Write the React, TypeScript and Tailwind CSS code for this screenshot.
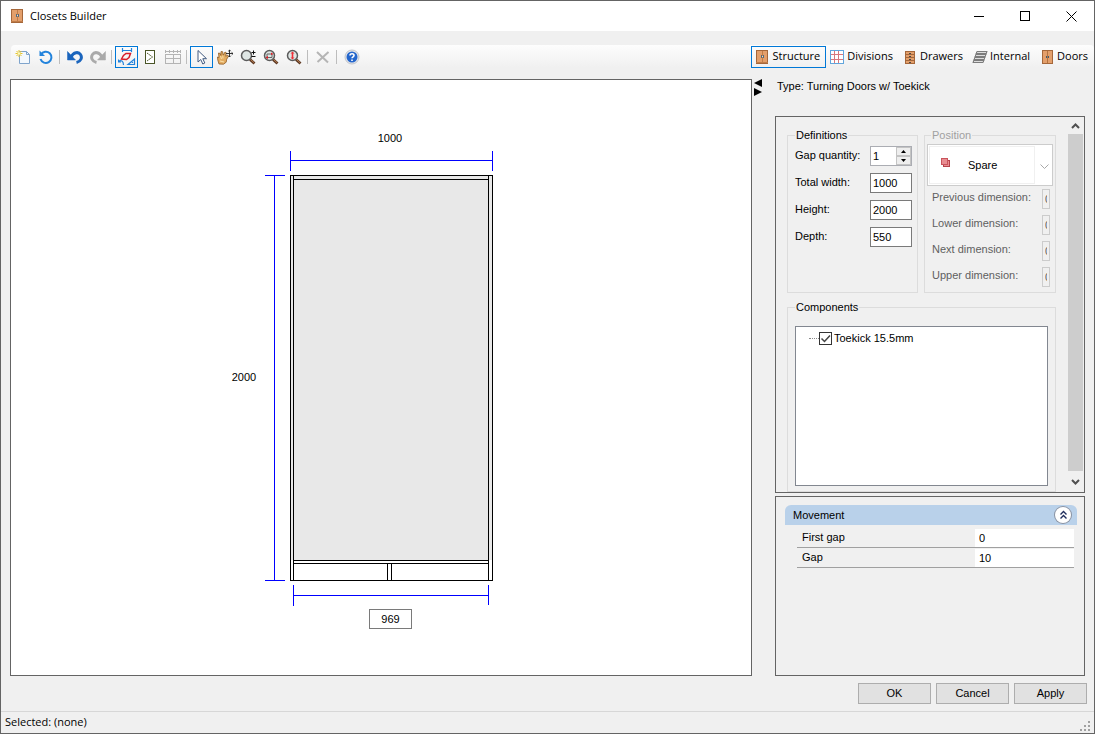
import classNames from "clsx";
import React from "react";

interface IconProps {
  className?: string;
}

const Svg: React.FC<React.SVGProps<SVGSVGElement>> = (props) => (
  <svg width={16} height={16} viewBox="0 0 16 16" fill="none" className="shrink-0" aria-hidden="true" {...props} />
);

const ClosetIcon: React.FC<IconProps> = () => (
  <Svg shapeRendering="crispEdges">
    <path d="M2 1h12v14H2z" fill="#a5673a" />
    <path d="M3 2h10v11H3z" fill="#e39f6b" />
    <path d="M8 2h1v11H8zM2 13h12v1H2z" fill="#c07c49" />
    <path d="M7 6h1v3H7zM9 6h1v3H9z" fill="#4e6b80" />
    <path d="M8 7h1v1H8z" fill="#e8e2d8" />
  </Svg>
);

const DoorsIcon: React.FC<IconProps> = () => (
  <Svg shapeRendering="crispEdges">
    <path d="M3 1h11v14H3z" fill="#a5673a" />
    <path d="M4 2h9v12H4z" fill="#e39f6b" />
    <path d="M8 2h1v12H8z" fill="#b5733f" />
    <path d="M7 7h1v2H7zM9 7h1v2H9z" fill="#3f5a70" />
  </Svg>
);

const DivisionsIcon: React.FC<IconProps> = () => (
  <Svg shapeRendering="crispEdges">
    <path d="M1 1h14v14H1z" fill="#fff" />
    <path d="M5.500 1v14M9.500 1v14M1 5.500h14M1 10.500h14" stroke="#d9777c" />
    <path d="M1.500 1.500h13v13h-13z" stroke="#62a5dc" />
  </Svg>
);

const DrawersIcon: React.FC<IconProps> = () => (
  <Svg shapeRendering="crispEdges">
    <path d="M3 2h10v13H3z" fill="#a5673a" />
    <path d="M4 3h8v2H4zM4 6h8v2H4zM4 9h8v2H4zM4 12h8v2H4z" fill="#e39f6b" />
    <path d="M7 4h2v1H7zM7 7h2v1H7zM7 10h2v1H7zM7 13h2v1H7z" fill="#4a4a4a" />
  </Svg>
);

const InternalIcon: React.FC<IconProps> = () => (
  <Svg stroke="#7c7c7c">
    <path d="M5 2.500h10l-1 2H4zM4 5.500h10l-1 2H3zM3 8.500h10l-1 2H2zM2 11.500h10l-1 2H1z" fill="#ddd" />
    <path d="M5 2.500L1 13.500M15 2.500L11 13.500" />
  </Svg>
);

const NewIcon: React.FC<IconProps> = () => (
  <Svg>
    <path d="M4.500 2.500h7l3 3v9h-10z" fill="#f3f8fd" stroke="#7fa4cc" />
    <path d="M11.500 2.500v3h3" stroke="#7fa4cc" />
    <path d="M4 1v7M.5 4.500h7M1.500 2l5 5M6.500 2l-5 5" stroke="#e6c52b" />
    <circle cx={4} cy={4.500} r={1.300} fill="#fff9b8" />
  </Svg>
);

const RefreshIcon: React.FC<IconProps> = () => (
  <Svg>
    <path d="M3 5.500a5.600 5.600 0 1 1-.5 4.500" stroke="#2283dc" strokeWidth={2} />
    <path d="M1.500 1.500v5.500H7z" fill="#2283dc" />
  </Svg>
);

const ArrowBackIcon: React.FC<{ redo?: boolean }> = ({ redo }) => (
  <Svg>
    <g
      transform={redo ? "matrix(-1 0 0 1 16 0)" : undefined}
      stroke={redo ? "#aaa" : "#1b65bd"}
      fill={redo ? "#aaa" : "#1b65bd"}
    >
      <path d="M4 8c2.500-5 7.500-5.500 9.500-2.500s.5 7-4 8" fill="none" strokeWidth={3} />
      <path d="M.5 2.500v8.500h8z" strokeWidth={0.500} />
    </g>
  </Svg>
);

const ShapesIcon: React.FC<IconProps> = () => (
  <Svg width={18} height={18} viewBox="0 0 18 18" strokeWidth={1.200}>
    <path d="M4.500 0v4M13.500 0v4M4.500 2.500h9" stroke="#2283dc" />
    <path d="M3.500 11l2-3.500 2.500-2h4.500l-1.500 4-2.500 2z" stroke="#d81e2c" strokeWidth={1.500} />
    <path d="M.5 13.500c2.500-2 5-.5 5 3.500M.5 11.500v2.500h2.500M16.500 11v5.500h-6.500zM14.500 14v1" stroke="#2283dc" />
  </Svg>
);

const OpeningIcon: React.FC<IconProps> = () => (
  <Svg>
    <path d="M3.500 1.500h9v13h-9z" fill="#fff" stroke="#4a5527" shapeRendering="crispEdges" />
    <path d="M5 4l5.500 4L5 12" stroke="#4a5527" strokeDasharray="1.500 .5" />
  </Svg>
);

const GridIcon: React.FC<IconProps> = () => (
  <Svg stroke="#b4b4b4" shapeRendering="crispEdges">
    <path d="M.5 5.500h15v9H.5zM8.500 5v9M0 9.500h16M0 2.500h16M.5 1v3M4.500 1v3M8.500 1v3M12.500 1v3M15.500 1v3" />
  </Svg>
);

const CursorIcon: React.FC<IconProps> = () => (
  <Svg>
    <path d="M4 1.500v11.500l2.800-2.500 2 4.500 2-1-2-4.300h3.700z" fill="#fff" stroke="#415a80" />
  </Svg>
);

const HandIcon: React.FC<IconProps> = () => (
  <Svg>
    <path
      d="M2 15L.8 11 .5 8l1.500.5L1.500 4l1.600.4.8 2L4 2.500l1.600.2.7 3.500L8 3l1.300.8-.6 3.400 2-1 .8 1-1.800 3-.5 3-2.700 2z"
      fill="#e3ac61"
      stroke="#8e5b24"
      strokeWidth={0.800}
    />
    <path d="M3.500 7l1 3M5.800 6.500l.2 3M3 12l4 1" stroke="#fae0a9" />
    <path
      d="M12.500 1v7M9 4.500h7M11.300 2.200l1.200-1.200 1.200 1.200M11.300 6.800L12.500 8l1.200-1.200M14.800 3.300L16 4.500l-1.200 1.200"
      stroke="#222"
      strokeWidth={0.900}
    />
  </Svg>
);

const ZoomIcon: React.FC<{ mode: "step" | "window" | "extents" }> = ({ mode }) => (
  <Svg>
    <path d="M10 10.500l4.500 4" stroke="#5b3823" strokeWidth={2.800} />
    <path d="M10.500 10.500l3.700 3.300" stroke="#bd8153" />
    <circle cx={6.500} cy={6.500} r={5} fill="#dfe6e4" stroke="#5c5c5c" strokeWidth={1.500} />
    {mode === "step" && <path d="M11.500 3.500h4M13.500 1.500v4M11.500 7.500h4" stroke="#111" />}
    {mode === "window" && (
      <>
        <path d="M4 5h5v3.500H4z" stroke="#666" />
        <path d="M8 3.500l2.500 1.500L8 6zM5 7L2.500 8.500 5 10z" fill="#e11d26" />
      </>
    )}
    {mode === "extents" && <path d="M6.500 2.500L8.500 4.500H7.300v4h1.200L6.500 10.500l-2-2h1.200v-4H4.500z" fill="#ee3038" />}
  </Svg>
);

const DeleteIcon: React.FC<IconProps> = () => (
  <Svg stroke="#b5b5b5" strokeWidth={2}>
    <path d="M2 3l11 10.500M13.500 3L2.500 13" />
  </Svg>
);

const HelpIcon: React.FC<IconProps> = () => (
  <Svg>
    <circle cx={8} cy={8} r={7} fill="#e4e6ea" stroke="#c2c5cc" />
    <circle cx={8} cy={8} r={5.500} fill="#2466cc" />
    <path
      d="M6 6.500C6 4 10.200 4.200 10 6.500c-.1 1.300-1.900 1.300-2 2.800M8 10.500v1.500"
      stroke="#fff"
      strokeWidth={1.600}
    />
  </Svg>
);

interface Tool {
  label: string;
  icon: React.ReactNode;
  active?: boolean;
}

const toolGroups: Tool[][] = [
  [
    { label: "New", icon: <NewIcon /> },
    { label: "Refresh", icon: <RefreshIcon /> },
  ],
  [
    { label: "Undo", icon: <ArrowBackIcon /> },
    { label: "Redo", icon: <ArrowBackIcon redo /> },
  ],
  [
    { label: "Dimensions", icon: <ShapesIcon />, active: true },
    { label: "Openings", icon: <OpeningIcon /> },
    { label: "Grid", icon: <GridIcon /> },
  ],
  [
    { label: "Select", icon: <CursorIcon />, active: true },
    { label: "Pan", icon: <HandIcon /> },
    { label: "Zoom", icon: <ZoomIcon mode="step" /> },
    { label: "Zoom window", icon: <ZoomIcon mode="window" /> },
    { label: "Zoom extents", icon: <ZoomIcon mode="extents" /> },
  ],
  [{ label: "Delete", icon: <DeleteIcon /> }],
  [{ label: "Help", icon: <HelpIcon /> }],
];

const tabs: Tool[] = [
  { label: "Structure", icon: <ClosetIcon />, active: true },
  { label: "Divisions", icon: <DivisionsIcon /> },
  { label: "Drawers", icon: <DrawersIcon /> },
  { label: "Internal", icon: <InternalIcon /> },
  { label: "Doors", icon: <DoorsIcon /> },
];

const sizes = [
  { label: "Total width:", value: "1000" },
  { label: "Height:", value: "2000" },
  { label: "Depth:", value: "550" },
];

const dimensions = ["Previous dimension:", "Lower dimension:", "Next dimension:", "Upper dimension:"];

const movement = [
  { label: "First gap", value: "0" },
  { label: "Gap", value: "10" },
];

const TitleBar: React.FC = () => (
  <header className="flex h-[30px] shrink-0 items-center bg-white pl-2 font-['Open_Sans',sans-serif] text-[11px]">
    <ClosetIcon />
    <h1 className="ml-[5px] flex-1">Closets Builder</h1>
    <button type="button" aria-label="Minimize" className="flex h-full w-[46px] items-center justify-center">
      <svg width="11" height="11" stroke="#000" shapeRendering="crispEdges">
        <path d="M0 5.500h10" />
      </svg>
    </button>
    <button type="button" aria-label="Maximize" className="flex h-full w-[46px] items-center justify-center">
      <svg width="11" height="11" stroke="#000" fill="none" shapeRendering="crispEdges">
        <path d="M.5 .5h9v9h-9z" />
      </svg>
    </button>
    <button type="button" aria-label="Close" className="flex h-full w-[46px] items-center justify-center">
      <svg width="11" height="11" stroke="#000">
        <path d="M.5 .5l10 10M10.500 .5l-10 10" />
      </svg>
    </button>
  </header>
);

const Toolbar: React.FC = () => (
  <nav className="mt-3.5 ml-2.5 flex h-[23px] shrink-0 items-center rounded-sm bg-linear-to-b from-[#fdfdfd] to-[#f0f0f0]">
    {toolGroups.map((group, index) => (
      <React.Fragment key={group[0].label}>
        {index > 0 && <span className="mr-[3px] ml-0.5 h-3.5 w-px bg-[#bdbdbd]" />}
        {group.map(({ label, icon, active }) => (
          <button
            key={label}
            type="button"
            aria-label={label}
            className={classNames(
              "flex h-[22px] w-[23px] items-center justify-center border",
              active ? "border-[#0078d7]" : "border-transparent",
            )}
          >
            {icon}
          </button>
        ))}
      </React.Fragment>
    ))}

    <div className="ml-auto flex font-['Open_Sans',sans-serif] text-[11px]">
      {tabs.map(({ label, icon, active }) => (
        <button
          key={label}
          type="button"
          className={classNames(
            "flex h-[22px] items-center gap-0.5 border pr-[5px] pl-0.5",
            active ? "border-[#0078d7]" : "border-transparent",
          )}
        >
          {icon}
          {label}
        </button>
      ))}
    </div>
  </nav>
);

const Drawing: React.FC = () => (
  <main className="flex min-h-0 min-w-0 flex-1 border border-[#646464] bg-white">
    <svg viewBox="0 0 740 595" className="min-h-0 w-full flex-1" fill="none" shapeRendering="crispEdges">
      <path d="M280 96h201v384H280z" fill="#e8e8e8" />
      <path
        d="M279.500 95.500h202v405h-202zM282.500 95.500v405M477.500 95.500v405M282.500 99.500h195M282.500 480.500h195M282.500 483.500h195M376.500 483.500v17M380.500 483.500v17"
        stroke="#000"
      />
      <path
        d="M279.500 71v20M481.500 71v20M279.500 80.500h202M254 95.500h20M254 500.500h20M263.500 95.500v405M282.500 505v21M477.500 505v20M282.500 515.500h195"
        stroke="#0000ff"
      />
      <g fill="#000" className="font-['Liberation_Sans',sans-serif] text-[11px]" textAnchor="middle">
        <text x="379" y="62">1000</text>
        <text x="233" y="301">2000</text>
      </g>
      <foreignObject x="358" y="529" width="43" height="20">
        <input
          aria-label="Inner width"
          defaultValue="969"
          className="block h-5 w-full border border-[#7a7a7a] bg-white text-center text-[11px] text-black"
        />
      </foreignObject>
    </svg>
  </main>
);

const Definitions: React.FC = () => (
  <fieldset className="w-[131px] border border-[#dcdcdc] pr-[5px] pb-2 pl-[7px]">
    <legend className="px-px leading-[14px]">Definitions</legend>
    <div className="mt-1 flex flex-col gap-[7px]">
      <div className="flex h-5 items-center justify-between">
        <label htmlFor="gaps" className="pb-px">Gap quantity:</label>
        <div className="flex h-5 w-[42px] border border-[#abadb3] bg-white">
          <input id="gaps" defaultValue="1" className="w-0 flex-1 pl-0.5" />
          <div className="flex w-[15px] flex-col">
            <button
              type="button"
              aria-label="More"
              className="flex flex-1 items-center justify-center border border-[#c4c4c4] bg-[#eee]"
            >
              <svg width="5" height="3">
                <path d="M0 3L2.500 0 5 3z" />
              </svg>
            </button>
            <button
              type="button"
              aria-label="Less"
              className="flex flex-1 items-center justify-center border border-[#c4c4c4] bg-[#eee]"
            >
              <svg width="5" height="3">
                <path d="M0 0L2.500 3 5 0z" />
              </svg>
            </button>
          </div>
        </div>
      </div>
      {sizes.map(({ label, value }) => (
        <div key={label} className="flex h-5 items-center justify-between">
          <label htmlFor={label} className="pb-px">{label}</label>
          <input id={label} defaultValue={value} className="h-5 w-[42px] border border-[#7a7a7a] bg-white pl-0.5" />
        </div>
      ))}
    </div>
  </fieldset>
);

const Position: React.FC = () => (
  <fieldset disabled className="w-[132px] border border-[#dcdcdc] px-0.5 pb-[5px] text-[#5f5f5f]">
    <legend className="ml-1 px-px leading-[14px] text-[#a0a0a0]">Position</legend>
    <div className="relative mt-0.5">
      <select
        aria-label="Position"
        className="block h-[42px] w-full appearance-none border border-[#ccc] bg-white pl-10 text-black opacity-100"
      >
        <option>Spare</option>
      </select>
      <span className="pointer-events-none absolute inset-y-0.5 right-[18px] left-0.5 border border-[#f0f0f0]" />
      <svg
        width="10"
        height="10"
        className="pointer-events-none absolute top-3.5 left-3.5"
        shapeRendering="crispEdges"
      >
        <path d="M2.500 2.500h6v6h-6z" fill="#e88d92" stroke="#b5434b" />
        <path d="M.5 .5h6v6h-6z" fill="#e88d92" stroke="#c9545c" />
      </svg>
      <svg width="9" height="6" className="pointer-events-none absolute top-5 right-1" fill="none" stroke="#a8a8a8">
        <path d="M.5 .5l4 4 4-4" />
      </svg>
    </div>
    <div className="mt-[3px] flex flex-col gap-1.5 pr-[3px] pl-[5px]">
      {dimensions.map((label) => (
        <div key={label} className="flex h-5 items-center justify-between">
          <label htmlFor={label} className="pb-[3px] whitespace-nowrap">{label}</label>
          <input id={label} defaultValue="0" className="h-5 w-2 shrink-0 border border-[#ccc] px-0.5" />
        </div>
      ))}
    </div>
  </fieldset>
);

const Components: React.FC = () => (
  <fieldset className="mt-[7px] border border-[#dcdcdc] px-[7px] pb-[5px]">
    <legend className="px-px leading-[14px]">Components</legend>
    <div className="mt-3 h-40 border border-[#828790] bg-white pt-1 pl-[13px]">
      <label className="flex items-center leading-[14px]">
        <span className="w-2.5 border-t border-dotted border-[#888]" />
        <span className="relative flex">
          <input
            type="checkbox"
            defaultChecked
            className="peer size-[13px] appearance-none border border-[#333] bg-white"
          />
          <svg
            width="13"
            height="13"
            fill="none"
            stroke="#444"
            strokeWidth="1.5"
            className="pointer-events-none absolute inset-0 hidden peer-checked:block"
          >
            <path d="M2.500 6.500l3 3 5.500-6" />
          </svg>
        </span>
        <span className="ml-0.5">Toekick 15.5mm</span>
      </label>
    </div>
  </fieldset>
);

const ScrollBar: React.FC = () => (
  <div className="flex w-4 flex-col border-r border-[#f0f0f0]">
    <button type="button" aria-label="Scroll up" className="flex h-[17px] items-center justify-center">
      <svg width="9" height="6" fill="none" stroke="#505050" strokeWidth="2">
        <path d="M1 5l3.500-3.500L8 5" />
      </svg>
    </button>
    <div className="flex-1 bg-[#cdcdcd]" />
    <button type="button" aria-label="Scroll down" className="flex h-[21px] items-center justify-center">
      <svg width="9" height="6" fill="none" stroke="#505050" strokeWidth="2">
        <path d="M1 1l3.500 3.500L8 1" />
      </svg>
    </button>
  </div>
);

const Movement: React.FC = () => (
  <section className="mt-[3px] flex-1 border border-[#646464] pt-2 pr-[7px] pl-[9px]">
    <div className="flex h-5 items-center justify-between rounded-t-md bg-[#b9d1ea] pr-1.5 pl-2">
      <h2>Movement</h2>
      <button
        type="button"
        aria-label="Collapse"
        className="flex size-4 items-center justify-center rounded-full bg-white shadow-[0_0_0_1px_#8a93a3]"
      >
        <svg width="9" height="10" fill="none" stroke="#1f2d5c" strokeWidth="1.4">
          <path d="M1.500 4.500l3-3 3 3M1.500 8.500l3-3 3 3" />
        </svg>
      </button>
    </div>
    <div className="mt-[3px] mr-[3px] ml-3">
      {movement.map(({ label, value }) => (
        <div key={label} className="flex h-5 items-center border-b border-[#a0a0a0]">
          <label htmlFor={label} className="flex-1 pl-[5px]">{label}</label>
          <input id={label} defaultValue={value} className="h-[18px] w-[99px] bg-white pl-1" />
        </div>
      ))}
    </div>
  </section>
);

const SidePanel: React.FC = () => (
  <aside className="flex w-[310px] shrink-0 flex-col">
    <p className="h-[37px] pl-0.5 leading-[14px]">Type: Turning Doors w/ Toekick</p>
    <section className="flex border border-[#646464]">
      <div className="flex-1 pt-[11px] pr-3 pl-[11px]">
        <div className="flex justify-between">
          <Definitions />
          <Position />
        </div>
        <Components />
      </div>
      <ScrollBar />
    </section>
    <Movement />
  </aside>
);

export default function App() {
  return (
    <div className="flex h-screen flex-col overflow-hidden border border-[#646464] bg-[#f0f0f0] font-['Liberation_Sans',sans-serif] text-[11px] text-black">
      <TitleBar />
      <Toolbar />

      <div className="mt-[11px] flex min-h-0 flex-1 px-[9px]">
        <Drawing />
        <button type="button" aria-label="Toggle side panel" className="mr-3 flex w-[11px] flex-col items-center">
          <svg width="8" height="18">
            <path d="M8 0v8L0 4zM0 9v8l8-4z" />
          </svg>
        </button>
        <SidePanel />
      </div>

      <div className="flex justify-end gap-[5px] py-[7px] pr-[7px]">
        {["OK", "Cancel", "Apply"].map((label) => (
          <button key={label} type="button" className="h-[21px] w-[73px] border border-[#adadad] bg-[#e1e1e1]">
            {label}
          </button>
        ))}
      </div>

      <footer className="flex h-[22px] shrink-0 items-center justify-between border-t border-[#d7d7d7] pl-1 font-['Open_Sans',sans-serif] text-[11px]">
        <span>Selected: (none)</span>
        <svg width="12" height="12" className="mr-0.5 self-end" fill="#a0a0a0" shapeRendering="crispEdges">
          <path d="M8 0h2v2H8zM4 4h2v2H4zM8 4h2v2H8zM0 8h2v2H0zM4 8h2v2H4zM8 8h2v2H8z" />
        </svg>
      </footer>
    </div>
  );
}
